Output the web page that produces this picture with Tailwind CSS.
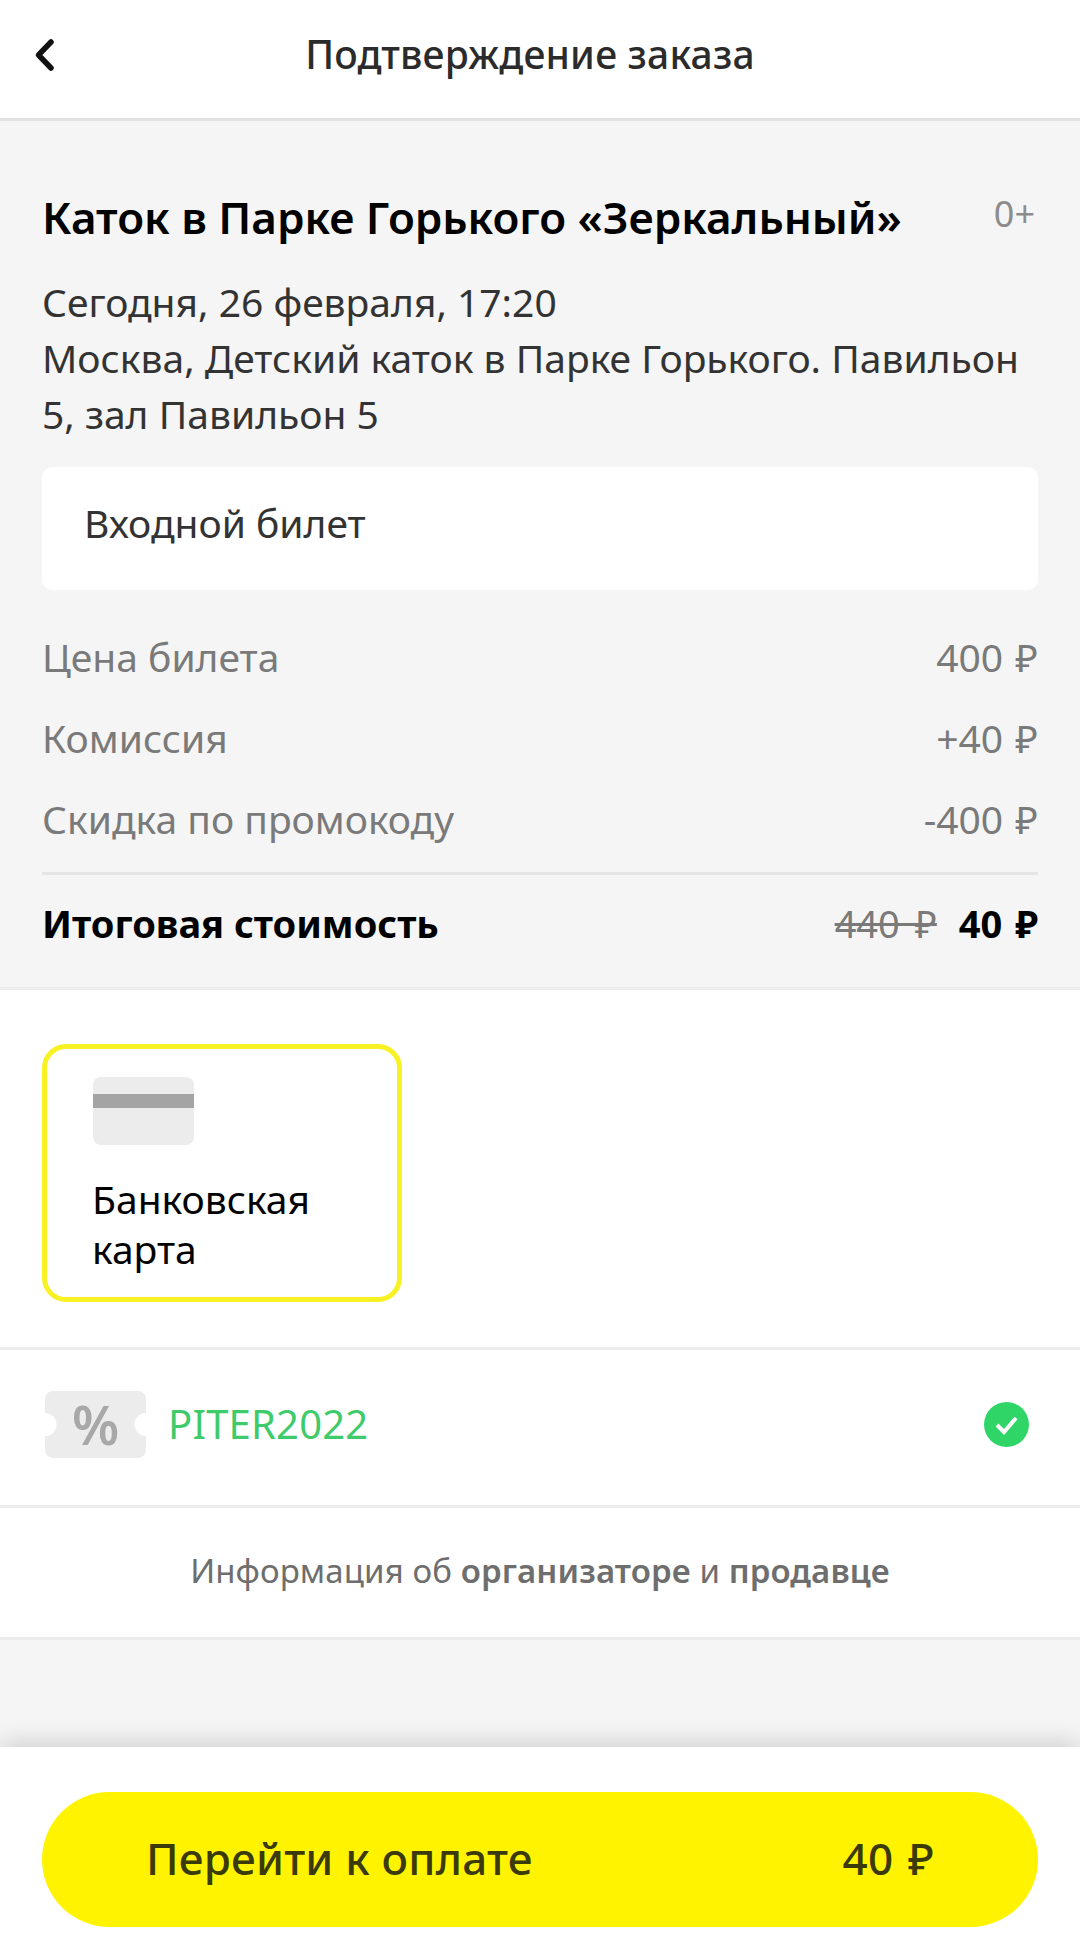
<!DOCTYPE html>
<html lang="ru">
<head>
<meta charset="utf-8">
<script src="https://cdn.jsdelivr.net/npm/@tailwindcss/browser@4"></script>
</head>
<body class="font-['Noto_Sans',sans-serif] bg-white">
<div class="w-[1080px] h-[1957px] flex flex-col overflow-hidden bg-[#f5f5f5]">
  <header class="relative h-[121px] shrink-0 bg-white border-b-[3px] border-[#e2e2e2] flex items-center justify-center">
    <svg class="absolute left-[34px] top-[38px]" width="22" height="34" viewBox="0 0 22 34" fill="none"><path d="M17 4 L4.5 17 L17 30" stroke="#111" stroke-width="5.5" stroke-linecap="round" stroke-linejoin="round"/></svg>
    <h1 class="text-[39px] leading-[48px] font-medium text-[#2b2b2b] pb-[10px] ml-[-20px] tracking-[0.2px]">Подтверждение заказа</h1>
  </header>
  <section class="h-[869px] shrink-0 px-[42px] pt-[68px] border-b-[3px] border-[#ececec]">
    <div class="flex justify-between">
      <h2 class="text-[44px] leading-[56px] font-semibold text-black whitespace-nowrap">Каток в Парке Горького «Зеркальный»</h2>
      <span class="text-[36px] leading-[38px] text-[#8c8c8c] mr-[3px] mt-[6px]">0+</span>
    </div>
    <p class="mt-[29px] text-[39px] leading-[56px] text-[#333] whitespace-nowrap">Сегодня, 26 февраля, 17:20<br>Москва, Детский каток в Парке Горького. Павильон<br>5, зал Павильон 5</p>
    <div class="mt-[25px] h-[123px] bg-white rounded-[10px] pl-[42px] pb-[10px] flex items-center text-[39px] text-[#333]">Входной билет</div>
    <div class="mt-[39px] flex flex-col gap-[25px] text-[39px] leading-[56px] text-[#7a7a7a]">
      <div class="flex justify-between"><span>Цена билета</span><span class="[word-spacing:2px]">400 ₽</span></div>
      <div class="flex justify-between"><span>Комиссия</span><span class="[word-spacing:2px]">+40 ₽</span></div>
      <div class="flex justify-between"><span>Скидка по промокоду</span><span class="[word-spacing:2px]">-400 ₽</span></div>
    </div>
    <div class="mt-[25px] h-[3px] bg-[#e4e4e4]"></div>
    <div class="mt-[24px] flex justify-between items-center text-[38px] leading-[48px]">
      <span class="font-bold text-black">Итоговая стоимость</span>
      <span class="flex gap-[22px]"><s class="text-[#7a7a7a] decoration-[3px] [word-spacing:5px]">440 ₽</s><b class="font-bold text-black [word-spacing:3px]">40 ₽</b></span>
    </div>
  </section>
  <section class="h-[360px] shrink-0 bg-white border-b-[3px] border-[#ececec] pt-[54px] px-[42px]">
    <div class="w-[360px] h-[258px] border-[5px] border-[#f8f124] rounded-[24px] pl-[46px] pt-[28px]">
      <div class="w-[101px] h-[68px] bg-[#ececec] rounded-[8px] pt-[17px]"><div class="h-[14px] bg-[#a4a4a4]"></div></div>
      <p class="mt-[29px] ml-[-1px] text-[39px] leading-[50px] text-black">Банковская<br>карта</p>
    </div>
  </section>
  <section class="h-[158px] shrink-0 bg-white border-b-[3px] border-[#ececec] pl-[45px] pr-[51px] pb-[7px] flex items-center justify-between">
    <div class="flex items-center gap-[22px]">
      <div class="relative w-[101px] h-[67px] flex items-center justify-center">
        <svg class="absolute inset-0" width="101" height="67" viewBox="0 0 101 67"><path d="M8 0 H93 A8 8 0 0 1 101 8 V22 A11.5 11.5 0 0 0 101 45 V59 A8 8 0 0 1 93 67 H8 A8 8 0 0 1 0 59 V45 A11.5 11.5 0 0 0 0 22 V8 A8 8 0 0 1 8 0 Z" fill="#ececec"/></svg>
        <span class="relative text-[54px] leading-[67px] font-semibold text-[#a8a8a8]">%</span>
      </div>
      <span class="text-[40px] text-[#3fcb6c] tracking-[0.2px]">PITER2022</span>
    </div>
    <svg width="45" height="45" viewBox="0 0 45 45"><circle cx="22.5" cy="22.5" r="22.5" fill="#30d567"/><path d="M13 23 L20 30 L32 16" fill="none" stroke="#fff" stroke-width="4"/></svg>
  </section>
  <section class="h-[132px] shrink-0 bg-white border-b-[3px] border-[#ececec] flex items-center justify-center text-[33px] text-[#6e6e6e] pb-[4px] tracking-[0.1px]">
    <p>Информация об <b class="font-semibold">организаторе</b> и <b class="font-semibold">продавце</b></p>
  </section>
  <div class="flex-1"></div>
  <footer class="relative h-[210px] shrink-0 bg-white shadow-[0_-4px_24px_rgba(0,0,0,0.16)] px-[42px] pt-[45px]">
    <button class="w-[996px] h-[135px] rounded-full bg-[#fff300] px-[104px] pb-[4px] flex items-center justify-between text-[44px] font-medium text-[#3a3a0a] tracking-[0.2px]"><span>Перейти к оплате</span><span class="[word-spacing:3px]">40 ₽</span></button>
  </footer>
</div>
</body>
</html>
